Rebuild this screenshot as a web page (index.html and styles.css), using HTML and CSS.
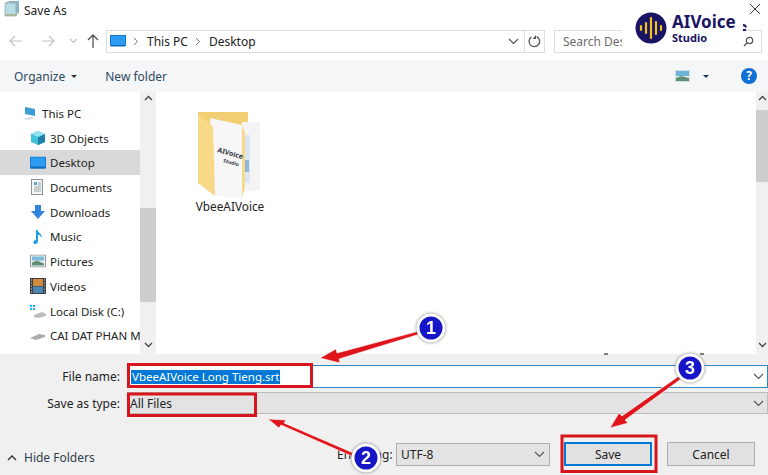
FILE: index.html
```html
<!DOCTYPE html>
<html lang="en">
<head>
    <meta charset="UTF-8">
    <title>Save As</title>
    <link rel="stylesheet" href="styles.css">
</head>
<body>
    <div class="dialog">
        <div class="titlebar">
            <svg class="title-icon" width="15" height="16" viewBox="0 0 15 16">
                <path d="M5 0h10v12H5z" fill="#8fb8c4"/>
                <path d="M3 1h10v13H3z" fill="#a7ccd8" stroke="#7d9ba6" stroke-width=".5"/>
                <path d="M1 2h11v13H1z" fill="#b9dbe6" stroke="#7d9ba6" stroke-width=".6"/>
                <path d="M1 13h11v2H1z" fill="#a9b89a"/>
            </svg>
            <span>Save As</span>
            <svg class="close-icon" width="12" height="12" viewBox="0 0 12 12">
                <path d="M1 1l10 10M11 1L1 11" stroke="#333" stroke-width="1" fill="none"/>
            </svg>
        </div>

        <div class="navrow">
            <div class="nav-arrows">
                <svg width="14" height="12" viewBox="0 0 14 12"><path d="M13 6H1M6 1L1 6l5 5" stroke="#c4c4c4" stroke-width="1.2" fill="none"/></svg>
                <svg width="14" height="12" viewBox="0 0 14 12"><path d="M1 6h12M8 1l5 5-5 5" stroke="#c4c4c4" stroke-width="1.2" fill="none"/></svg>
                <svg width="9" height="6" viewBox="0 0 9 6"><path d="M1 1l3.5 3.5L8 1" stroke="#c4c4c4" stroke-width="1.2" fill="none"/></svg>
                <svg width="12" height="14" viewBox="0 0 12 14"><path d="M6 14V1M1 6l5-5 5 5" stroke="#555" stroke-width="1.3" fill="none"/></svg>
            </div>
            <div class="address">
                <svg width="16" height="12" viewBox="0 0 16 12"><rect x=".5" y=".5" width="15" height="10" fill="#2b9cf2" stroke="#1a78c8"/><rect x="1" y="10" width="14" height="1.5" fill="#0f6db8"/></svg>
                <svg class="crumb-sep" width="6" height="9" viewBox="0 0 6 9"><path d="M1 1l3.5 3.5L1 8" stroke="#777" fill="none"/></svg>
                <span>This PC</span>
                <svg class="crumb-sep" width="6" height="9" viewBox="0 0 6 9"><path d="M1 1l3.5 3.5L1 8" stroke="#777" fill="none"/></svg>
                <span>Desktop</span>
                <svg class="address-chevron" width="11" height="7" viewBox="0 0 11 7"><path d="M1 1l4.5 4.5L10 1" stroke="#555" stroke-width="1.2" fill="none"/></svg>
            </div>
            <div class="refresh">
                <svg width="13" height="13" viewBox="0 0 13 13"><path d="M8.6 1.6A5.3 5.3 0 1 1 3.4 2" stroke="#555" stroke-width="1.3" fill="none"/><path d="M8 0v4H4.600" fill="#555"/></svg>
            </div>
            <div class="search">
                <span>Search Des</span>
                <svg width="11" height="11" viewBox="0 0 11 11"><circle cx="6.5" cy="4.500" r="3.200" stroke="#555" stroke-width="1.200" fill="none"/><path d="M4.200 6.800L1 10" stroke="#555" stroke-width="1.400"/></svg>
            </div>
        </div>

        <div class="toolbar">
            <span>Organize</span>
            <i class="caret"></i>
            <span class="new-folder">New folder</span>
            <svg class="view-icon" width="15" height="12" viewBox="0 0 15 12"><rect width="15" height="12" fill="#e8f0f2" stroke="#9aa7ad" stroke-width=".5"/><rect x="1" y="1" width="13" height="5" fill="#6db2d8"/><path d="M1 8l5-2 8 2v3H1z" fill="#5f8f73"/></svg>
            <i class="caret caret-dark"></i>
            <span class="help">?</span>
        </div>

        <div class="main">
            <ul class="sidebar">
                <li class="tree-root">
                    <svg width="16" height="16" viewBox="0 0 16 16"><path d="M3 2l10 2v7L3 9z" fill="#3d9ed6"/><path d="M1 14l8-2 4 1-7 2z" fill="#d5dbde"/></svg>
                    This PC
                </li>
                <li>
                    <svg width="16" height="16" viewBox="0 0 16 16"><path d="M8 1l7 3v8l-7 3-7-3V4z" fill="#3fc0d8"/><path d="M8 7l7-3v8l-7 3z" fill="#1f7fa8"/><path d="M8 1l7 3-7 3-7-3z" fill="#8fe3ee"/></svg>
                    3D Objects
                </li>
                <li class="selected">
                    <svg width="16" height="13" viewBox="0 0 16 13"><rect x=".5" y=".5" width="15" height="11" fill="#2b9cf2" stroke="#1a78c8"/><rect x="1" y="10" width="14" height="2" fill="#0f6db8"/></svg>
                    Desktop
                </li>
                <li>
                    <svg width="14" height="16" viewBox="0 0 14 16"><rect x="1.500" y=".5" width="11" height="15" fill="#f2f4f5" stroke="#8b9499"/><path d="M4 3h3v3H4z" fill="#5aa6d6"/><path d="M8 4h3M8 6h3M4 8h7M4 10h7M4 12h7" stroke="#9aa5ab"/></svg>
                    Documents
                </li>
                <li>
                    <svg width="16" height="16" viewBox="0 0 16 16"><path d="M5 1h6v6h4l-7 8-7-8h4z" fill="#2f86dc"/></svg>
                    Downloads
                </li>
                <li>
                    <svg width="16" height="16" viewBox="0 0 16 16"><path d="M6 1h1.500c.5 3 5 3.500 4 8-.5-2-2-3-3.500-3.500V12c0 2-2 3.500-3.500 3-1.500-.5-1.500-2.500 0-3.500.5-.3 1-.5 1.500-.4z" fill="#1c9be8"/></svg>
                    Music
                </li>
                <li>
                    <svg width="16" height="13" viewBox="0 0 16 13"><rect x=".5" y=".5" width="15" height="12" fill="#eef2f3" stroke="#8e999e"/><rect x="2" y="2" width="12" height="4" fill="#7ab9dc"/><path d="M2 8l5-2 7 3v2H2z" fill="#5f8f73"/></svg>
                    Pictures
                </li>
                <li>
                    <svg width="16" height="16" viewBox="0 0 16 16"><rect width="16" height="16" fill="#3b3f42"/><rect x="3" y="1" width="10" height="7" fill="#d08a3c"/><rect x="3" y="8.500" width="10" height="6.500" fill="#4e86b8"/><path d="M1 2h1M1 5h1M1 8h1M1 11h1M1 14h1M14 2h1M14 5h1M14 8h1M14 11h1M14 14h1" stroke="#ddd"/></svg>
                    Videos
                </li>
                <li>
                    <svg width="16" height="14" viewBox="0 0 16 14"><path d="M4 11l8-3 4 2v2l-8 2-4-1z" fill="#b9bdc0"/><path d="M0 1h2v2H0zM3 1h2v2H3zM0 4h2v2H0zM3 4h2v2H3z" fill="#1ab1e6"/></svg>
                    Local Disk (C:)
                </li>
                <li>
                    <svg width="16" height="8" viewBox="0 0 16 8"><path d="M0 6l9-4 6 1v2L6 8z" fill="#a9adb0"/></svg>
                    CAI DAT PHAN M
                </li>
            </ul>
            <div class="scrollbar scrollbar-left">
                <svg width="9" height="6" viewBox="0 0 9 6"><path d="M1 5l3.500-3.500L8 5" stroke="#444" stroke-width="1.300" fill="none"/></svg>
                <div class="thumb thumb-left"></div>
                <svg class="scroll-down" width="9" height="6" viewBox="0 0 9 6"><path d="M1 1l3.500 3.500L8 1" stroke="#444" stroke-width="1.300" fill="none"/></svg>
            </div>
            <div class="files">
                <div class="file-item">
                    <svg width="64" height="86" viewBox="0 0 64 86">
                        <path d="M0 0h50v10L47 72H0z" fill="#f3cf73"/>
                        <path d="M44 10h18v68l-18 2z" fill="#f4f4f4"/>
                        <rect x="44" y="23" width="8" height="48" fill="#dbe6f2"/>
                        <rect x="45" y="48" width="6" height="12" fill="#8fb9da"/>
                        <path d="M12 6l32 7v73l-28-2z" fill="#f7f7f7"/>
                        <path d="M44 13l3 8v54l-3 11z" fill="#f6d98c"/>
                        <text class="folder-text" transform="translate(19 40) rotate(16)">AIVoice</text>
                        <text class="folder-text small" transform="translate(25 50) rotate(16)">Studio</text>
                        <path d="M0 1l15 14 2 69L0 71z" fill="#f8d987"/>
                    </svg>
                    <span>VbeeAIVoice</span>
                </div>
            </div>
            <div class="scrollbar scrollbar-right">
                <svg width="9" height="6" viewBox="0 0 9 6"><path d="M1 5l3.500-3.500L8 5" stroke="#444" stroke-width="1.300" fill="none"/></svg>
                <div class="thumb thumb-right"></div>
                <svg class="scroll-down" width="9" height="6" viewBox="0 0 9 6"><path d="M1 1l3.500 3.500L8 1" stroke="#444" stroke-width="1.300" fill="none"/></svg>
            </div>
        </div>

        <div class="bottom">
            <div class="fields">
                <label>File name:</label>
                <div class="field field-name">
                    <span class="selection">VbeeAIVoice Long Tieng.srt</span>
                    <svg width="11" height="7" viewBox="0 0 11 7"><path d="M1 1l4.500 4.500L10 1" stroke="#555" stroke-width="1.100" fill="none"/></svg>
                </div>
                <label>Save as type:</label>
                <div class="field field-type">
                    <span>All Files</span>
                    <svg width="11" height="7" viewBox="0 0 11 7"><path d="M1 1l4.500 4.500L10 1" stroke="#555" stroke-width="1.100" fill="none"/></svg>
                </div>
            </div>
            <div class="footer">
                <div class="hide-folders">
                    <svg width="10" height="7" viewBox="0 0 10 7"><path d="M1 6l4-4 4 4" stroke="#333" stroke-width="1.400" fill="none"/></svg>
                    <span>Hide Folders</span>
                </div>
                <span class="encoding-label">Encoding:</span>
                <div class="encoding">
                    <span>UTF-8</span>
                    <svg width="11" height="7" viewBox="0 0 11 7"><path d="M1 1l4.500 4.500L10 1" stroke="#555" stroke-width="1.100" fill="none"/></svg>
                </div>
                <button class="btn btn-save">Save</button>
                <button class="btn">Cancel</button>
            </div>
        </div>
    </div>

    <div class="logo">
        <svg width="32" height="32" viewBox="0 0 32 32">
            <circle cx="16" cy="16" r="15.500" fill="#1a1464"/>
            <path d="M6 14v4M11 11v10M16 6v20M21 10v12M26 14v4" stroke="#f4c21d" stroke-width="2.200" stroke-linecap="round"/>
        </svg>
        <div class="logo-text">
            <span class="logo-name">AIVoice</span>
            <span class="logo-sub">Studio</span>
        </div>
    </div>

    <svg class="marks" width="768" height="475" viewBox="0 0 768 475">
        <path d="M743 25a3 3 0 0 1 3 2.500M743 30h3" stroke="#1a1464" stroke-width="2" fill="none"/>
        <path d="M604 354h4M700 354h4" stroke="#555" stroke-width="1.500"/>
        <g fill="none" stroke="#d8151c" stroke-width="3">
            <rect x="128.500" y="364.500" width="183" height="22"/>
            <rect x="128.500" y="394" width="127" height="21.500"/>
            <rect x="562" y="436" width="94" height="35.500"/>
        </g>
        <g fill="#e0141b" stroke="#fff" stroke-width=".6">
            <path d="M320 358l16-9 1 4 82-22 1 3-81 25 1 4z"/>
            <path d="M268 419l18 1-2 3 74 32-2 3-75-33-2 3z"/>
            <path d="M610 428l9-15 3 3 57-40 2 3-56 41 3 3z"/>
        </g>
        <g class="badge">
            <circle cx="431" cy="328" r="13"/>
            <text x="431" y="334">1</text>
        </g>
        <g class="badge">
            <circle cx="366" cy="458" r="13"/>
            <text x="366" y="464">2</text>
        </g>
        <g class="badge">
            <circle cx="690" cy="368" r="13"/>
            <text x="690" y="374">3</text>
        </g>
    </svg>
</body>
</html>
```

FILE: styles.css
```css
* {
    box-sizing: border-box;
}
body {
    margin: 0;
    width: 768px;
    height: 475px;
    overflow: hidden;
    position: relative;
    background-color: #fff;
    font-family: "Noto Sans", "Open Sans", sans-serif;
    font-size: 11.500px;
    color: #222;
}
.dialog {
    display: flex;
    flex-direction: column;
    height: 475px;
}
.titlebar {
    display: flex;
    align-items: center;
    height: 20px;
    padding: 0 7px 0 4px;
    gap: 5px;
    font-size: 12px;
}
.title-icon {
    margin-top: -3px;
}
.close-icon {
    margin-left: auto;
    margin-top: -3px;
}
.navrow {
    display: flex;
    align-items: center;
    height: 40px;
    flex-shrink: 0;
    padding: 2px 0 0 9px;
}
.nav-arrows {
    display: flex;
    align-items: center;
    width: 97px;
}
.nav-arrows svg:nth-child(2) {
    margin-left: 18px;
}
.nav-arrows svg:nth-child(3) {
    margin-left: 14px;
}
.nav-arrows svg:nth-child(4) {
    margin-left: 9px;
}
.address {
    display: flex;
    align-items: center;
    width: 418px;
    height: 23px;
    padding: 0 3px 0 3px;
    border: 1px solid #dedede;
    border-right: 0;
    font-size: 12px;
}
.crumb-sep {
    margin: 0 8px 0 7px;
}
.address-chevron {
    margin-left: auto;
    margin-right: 2px;
}
.refresh {
    display: flex;
    align-items: center;
    justify-content: center;
    width: 21px;
    height: 23px;
    border: 1px solid #dedede;
}
.search {
    display: flex;
    align-items: center;
    justify-content: space-between;
    width: 208px;
    height: 23px;
    margin-left: 9px;
    padding: 0 7px 0 8px;
    border: 1px solid #dedede;
    color: #6d6d6d;
    font-size: 12px;
}
.toolbar {
    display: flex;
    align-items: center;
    height: 32px;
    flex-shrink: 0;
    padding-left: 14px;
    background-color: #f5f6f7;
    color: #2f4a63;
    font-size: 12px;
}
.caret {
    width: 0;
    height: 0;
    margin: 1px 0 0 6px;
    border: 3.500px solid transparent;
    border-top-color: #333;
    border-bottom: 0;
}
.new-folder {
    margin-left: 28px;
}
.view-icon {
    margin-left: auto;
}
.caret-dark {
    margin-left: 13px;
    border-top-color: #1f3a58;
}
.help {
    width: 16px;
    height: 16px;
    margin: 0 11px 0 32px;
    border-radius: 50%;
    background-color: #0f6fd2;
    color: #fff;
    font-weight: 700;
    font-size: 12px;
    line-height: 16px;
    text-align: center;
}
.main {
    display: flex;
    height: 262px;
    flex-shrink: 0;
}
.sidebar {
    width: 140px;
    margin: 0;
    padding: 9px 0 0;
    list-style: none;
    overflow: hidden;
}
.sidebar li {
    position: relative;
    height: 24.700px;
    padding-left: 50px;
    line-height: 26.700px;
    white-space: nowrap;
}
.sidebar li svg {
    position: absolute;
    left: 30px;
    top: 50%;
    transform: translateY(-50%);
}
.sidebar .tree-root {
    padding-left: 42px;
}
.sidebar .tree-root svg {
    left: 22px;
}
.sidebar .selected {
    background-color: #d9d9d9;
}
.scrollbar {
    position: relative;
    display: flex;
    flex-direction: column;
    align-items: center;
    flex-shrink: 0;
    padding-top: 3px;
    background-color: #f0f0f0;
}
.scrollbar-left {
    width: 16px;
}
.scrollbar-right {
    width: 12px;
}
.thumb {
    position: absolute;
    left: 0;
    right: 0;
    background-color: #cdcdcd;
}
.thumb-left {
    top: 116px;
    height: 94px;
}
.thumb-right {
    top: 18px;
    height: 72px;
}
.scroll-down {
    position: absolute;
    bottom: 6px;
}
.files {
    flex: 1;
    padding: 20px 0 0 41px;
}
.file-item {
    display: flex;
    flex-direction: column;
    align-items: center;
    width: 66px;
    font-size: 11.800px;
}
.file-item span {
    white-space: nowrap;
}
.folder-text {
    font-family: "Noto Sans", sans-serif;
    font-size: 7px;
    font-weight: 700;
    fill: #33333f;
}
.folder-text.small {
    font-size: 5px;
}
.bottom {
    flex: 1;
    padding-top: 11px;
    background-color: #f0f0f0;
}
.fields {
    display: grid;
    grid-template-columns: 120px 1fr;
    grid-template-rows: 23px 22px;
    column-gap: 7px;
    row-gap: 4px;
}
.fields label {
    align-self: center;
    text-align: right;
    font-size: 12px;
}
.field {
    display: flex;
    align-items: center;
    justify-content: space-between;
    padding: 0 3px 0 3px;
}
.field-name {
    background-color: #fff;
    border: 1px solid #2f86c4;
}
.field-type {
    padding-left: 2px;
    background-color: #e3e3e3;
    border: 1px solid #bcbcbc;
    font-size: 12px;
}
.selection {
    padding: 0 1px;
    background-color: #0078d7;
    color: #fff;
    line-height: 14px;
}
.footer {
    display: flex;
    align-items: center;
    height: 24px;
    margin-top: 28px;
}
.hide-folders {
    display: flex;
    align-items: center;
    gap: 7px;
    width: 337px;
    padding-left: 7px;
    padding-top: 6px;
    color: #2f3e4d;
    font-size: 12px;
}
.encoding-label {
    width: 59px;
    font-size: 12px;
}
.encoding {
    display: flex;
    align-items: center;
    justify-content: space-between;
    width: 154px;
    height: 23px;
    padding: 0 4px;
    background-color: #e3e3e3;
    border: 1px solid #adadad;
    font-size: 12px;
}
.btn {
    width: 88px;
    height: 24px;
    margin-left: 15px;
    padding: 0;
    background-color: #e1e1e1;
    border: 1px solid #adadad;
    font-family: inherit;
    font-size: 12px;
    color: #222;
}
.btn-save {
    margin-left: 14px;
    border: 2px solid #0078d7;
}
.logo {
    position: absolute;
    left: 622px;
    top: 5px;
    display: flex;
    align-items: center;
    gap: 5px;
    width: 120px;
    height: 47px;
    padding: 0 0 2px 13px;
    background-color: #fff;
}
.logo-text {
    display: flex;
    flex-direction: column;
    color: #1a1464;
    font-weight: 700;
}
.logo-name {
    font-size: 17px;
    line-height: 19px;
}
.logo-sub {
    margin-top: 1px;
    font-size: 11px;
    line-height: 11px;
}
.marks {
    position: absolute;
    left: 0;
    top: 0;
}
.badge {
    filter: drop-shadow(0 0 1.500px #777);
}
.badge circle {
    fill: #1616c8;
    stroke: #fff;
    stroke-width: 3;
}
.badge text {
    font-family: "Liberation Sans", sans-serif;
    font-size: 18px;
    font-weight: 700;
    fill: #fff;
    text-anchor: middle;
}
```
